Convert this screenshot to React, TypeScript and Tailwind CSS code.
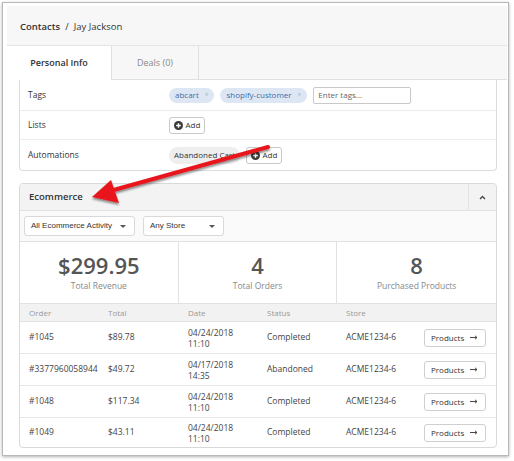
import React from 'react'

const orders = [
  { id: '#1045', total: '$89.78', date: '04/24/2018', time: '11:10', status: 'Completed' },
  { id: '#3377960058944', total: '$49.72', date: '04/17/2018', time: '14:35', status: 'Abandoned' },
  { id: '#1048', total: '$117.34', date: '04/24/2018', time: '11:10', status: 'Completed' },
  { id: '#1049', total: '$43.11', date: '04/24/2018', time: '11:10', status: 'Completed' },
]

const stats = [
  { value: '$299.95', label: 'Total Revenue' },
  { value: '4', label: 'Total Orders' },
  { value: '8', label: 'Purchased Products' },
]

function PlusCircle() {
  return (
    <svg width="9" height="9" viewBox="0 0 10 10" className="shrink-0">
      <circle cx="5" cy="5" r="5" fill="#3a3a3a" />
      <path d="M5 2.4v5.2M2.4 5h5.2" stroke="#fff" strokeWidth="1.6" />
    </svg>
  )
}

function AddButton() {
  return (
    <button
      type="button"
      className="flex h-[17px] w-[36px] items-center justify-center gap-[3px] rounded-[3px] border border-[#c9c9c9] bg-white text-[8px] text-[#333]"
    >
      <PlusCircle />
      Add
    </button>
  )
}

function Tag({ label }: { label: string }) {
  return (
    <span className="flex h-[15px] items-center gap-[6px] rounded-full bg-[#dde7f4] px-[6px] text-[8px] font-medium text-[#3d6da8]">
      {label}
      <span className="text-[6.5px] font-normal text-[#9fb1c8]">×</span>
    </span>
  )
}

function Select({ label, width }: { label: string; width: string }) {
  return (
    <div
      className={`flex h-[20px] ${width} items-center justify-between rounded-[3px] border border-[#d9d9d9] bg-white pl-[6px] pr-[8px] text-[8px] text-[#333]`}
      style={{ fontFamily: '"Liberation Sans", Arial, sans-serif' }}
    >
      {label}
      <span className="h-0 w-0 border-x-[3px] border-t-[3px] border-x-transparent border-t-[#555]" />
    </div>
  )
}

function InfoRow({ label, height, last, children }: { label: string; height: string; last?: boolean; children: React.ReactNode }) {
  return (
    <div className={`flex ${height} items-center ${last ? '' : 'border-b border-[#ececec]'}`}>
      <div className="w-[149px] pl-[8px] text-[8.5px] text-[#333]">{label}</div>
      <div className="flex items-center gap-[6px]">{children}</div>
    </div>
  )
}

export default function App() {
  return (
    <div
      className="relative h-[461px] w-[514px] overflow-hidden bg-white"
      style={{ fontFamily: '"Open Sans", "Noto Sans", sans-serif' }}
    >
      <div className="ml-[2px] mt-[2px] h-[454px] w-[507px] border border-[#b8b8b8] bg-white pl-[4px] pr-[1px] pt-[3px] shadow-[0_1px_3px_rgba(0,0,0,0.3)]">
        {/* breadcrumb */}
        <div className="flex h-[40px] items-center border-b border-[#e4e4e4] bg-[#f7f7f7] pl-[13px] pt-[3px] text-[9.5px] text-[#333]">
          <span className="font-semibold">Contacts</span>
          <span className="mx-[5px]">/</span>
          <span>Jay Jackson</span>
        </div>

        {/* tabs */}
        <div className="flex h-[34px] bg-[#f7f7f7] text-[9px]">
          <div className="flex w-[105px] items-center justify-center border-r border-[#e0e0e0] bg-white font-semibold text-[#333]">
            Personal Info
          </div>
          <div className="flex w-[87px] items-center justify-center border-b border-r border-[#e0e0e0] text-[#8a8a8a]">
            Deals (0)
          </div>
          <div className="flex-1 border-b border-[#e0e0e0]" />
        </div>

        <div className="bg-white pl-[12px] pr-[10px]">
          {/* contact details */}
          <div className="rounded-b-[4px] border-x border-b border-[#dcdcdc]">
            <InfoRow label="Tags" height="h-[31px]">
              <Tag label="abcart" />
              <Tag label="shopify-customer" />
              <div className="flex h-[17px] w-[98px] items-center rounded-[2px] border border-[#c9c9c9] px-[4px] text-[8px] text-[#666]">
                Enter tags...
              </div>
            </InfoRow>
            <InfoRow label="Lists" height="h-[29px]">
              <AddButton />
            </InfoRow>
            <InfoRow label="Automations" height="h-[30px]" last>
              <span className="flex h-[17px] items-center rounded-full bg-[#eeeeee] px-[5px] text-[8px] text-[#333]">
                Abandoned Cart
              </span>
              <AddButton />
            </InfoRow>
          </div>

          {/* ecommerce */}
          <div className="mt-[12px] overflow-hidden rounded-[4px] border border-[#d9d9d9]">
            <div className="flex h-[27px] items-center border-b border-[#e2e2e2] bg-[#f3f3f3]">
              <div className="flex-1 pl-[9px] text-[9.5px] font-semibold text-[#333]">Ecommerce</div>
              <div className="flex h-full w-[28px] items-center justify-center border-l border-[#e2e2e2]">
                <svg width="7" height="5" viewBox="0 0 7 5">
                  <path d="M1 4l2.5-2.5L6 4" fill="none" stroke="#444" strokeWidth="1.3" />
                </svg>
              </div>
            </div>

            <div className="flex h-[31px] items-center gap-[8px] border-b border-[#e2e2e2] bg-[#fafafa] px-[4px]">
              <Select label="All Ecommerce Activity" width="w-[111px]" />
              <Select label="Any Store" width="w-[81px]" />
            </div>

            <div className="grid h-[62px] grid-cols-3 border-b border-[#e2e2e2]">
              {stats.map((s, i) => (
                <div
                  key={s.label}
                  className={`flex flex-col items-center justify-center ${i < 2 ? 'border-r border-[#e2e2e2]' : ''}`}
                >
                  <div className="text-[22px] font-semibold leading-[24px] text-[#555]">{s.value}</div>
                  <div className="mt-[3px] text-[8.5px] font-medium leading-[12px] text-[#888]">{s.label}</div>
                </div>
              ))}
            </div>

            <div className="grid h-[18px] grid-cols-[88px_80px_79px_79px_78px_1fr] items-center border-b border-[#e2e2e2] bg-[#f2f2f2] text-[8px] text-[#999]">
              <div className="pl-[9px]">Order</div>
              <div>Total</div>
              <div>Date</div>
              <div>Status</div>
              <div>Store</div>
              <div />
            </div>

            {orders.map((o, i) => (
              <div
                key={o.id}
                className={`grid grid-cols-[88px_80px_79px_79px_78px_1fr] items-center text-[8.5px] text-[#444] ${
                  i < orders.length - 1 ? 'h-[32px] border-b border-[#e6e6e6]' : 'h-[29px]'
                }`}
              >
                <div className="pl-[9px]">{o.id}</div>
                <div>{o.total}</div>
                <div className="leading-[11px]">
                  {o.date}
                  <br />
                  {o.time}
                </div>
                <div>{o.status}</div>
                <div>ACME1234-6</div>
                <div>
                  <button
                    type="button"
                    className="flex h-[18px] w-[62px] items-center justify-between rounded-[3px] border border-[#cfcfcf] bg-white pl-[6px] pr-[7px] text-[8px] text-[#333]"
                  >
                    Products
                    <svg width="8" height="5" viewBox="0 0 8 5">
                      <path d="M0 2.5h6.5M5 0.8l2 1.7-2 1.7" fill="none" stroke="#333" strokeWidth="0.9" />
                    </svg>
                  </button>
                </div>
              </div>
            ))}
          </div>
        </div>
      </div>

      {/* annotation arrow */}
      <svg className="pointer-events-none absolute inset-0" width="514" height="461" viewBox="0 0 514 461">
        <defs>
          <filter id="sh" x="-20%" y="-20%" width="140%" height="160%">
            <feDropShadow dx="0" dy="2" stdDeviation="1.2" floodColor="#000" floodOpacity="0.45" />
          </filter>
        </defs>
        <g filter="url(#sh)">
          <line x1="268" y1="147" x2="110" y2="191" stroke="#e8161b" strokeWidth="4" strokeLinecap="round" />
          <polygon points="92,197 111,180 119,203" fill="#e8161b" />
        </g>
      </svg>
    </div>
  )
}
